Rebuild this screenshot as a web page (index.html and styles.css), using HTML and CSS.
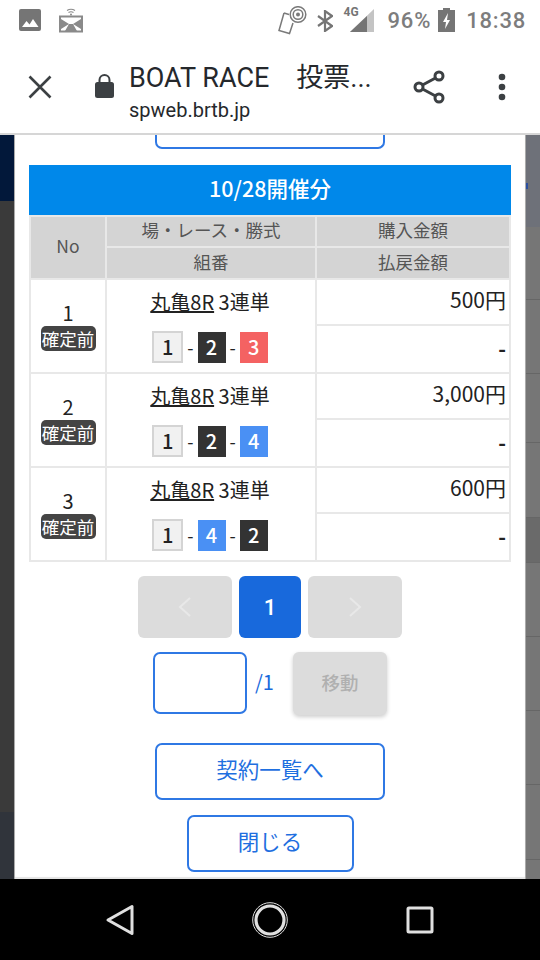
FILE: index.html
```html
<!DOCTYPE html>
<html lang="ja">
<head>
    <meta charset="UTF-8">
    <meta name="viewport" content="width=device-width, initial-scale=1.0">
    <title>BOAT RACE 投票</title>
    <link rel="stylesheet" href="styles.css">
</head>
<body>
    <div class="status-bar">
        <svg class="icon-image" width="22" height="22" viewBox="0 0 22 22"><rect width="22" height="22" rx="2" fill="#757575"/><path d="M3 18l4.500-6 3 3.500 3.500-5.500 5.500 8z" fill="#fff"/></svg>
        <svg class="icon-cast" width="24" height="26" viewBox="0 0 24 26" fill="none" stroke="#8a8a8a"><path d="M8 3.500q4-2.500 8 0M9.500 5.500q2.500-1.500 5 0" stroke-width="1.200"/><circle cx="12" cy="7.500" r="1" fill="#8a8a8a" stroke="none"/><rect x="1" y="9.500" width="22" height="15" stroke-width="2"/><path d="M2 12l8 5-8 5zM22 12l-8 5 8 5zM10 17h4l4 7H6z" fill="#8a8a8a" stroke="none"/></svg>
        <div class="spacer"></div>
        <svg class="icon-nfc" width="29" height="29" viewBox="0 0 29 29" fill="none" stroke="#7a7a7a" stroke-width="1.500"><path d="M6 7L1 24.500 11.500 27.500 15 17"/><path d="M6 7l5 1.500"/><circle cx="20" cy="8.500" r="7.800"/><circle cx="20" cy="8.500" r="4.800"/><circle cx="20" cy="8.500" r="2" fill="#7a7a7a" stroke="none"/></svg>
        <svg class="icon-bt" width="16" height="22" viewBox="0 0 16 22" fill="none" stroke="#757575" stroke-width="2.200"><path d="M1 6l14 10-7 5V1l7 5L1 16"/></svg>
        <div class="signal">
            <span class="signal-text">4G</span>
            <svg width="24" height="23" viewBox="0 0 24 23"><path d="M24 0v23H0z" fill="#c4c4c4"/><path d="M17 7v16H0z" fill="#757575"/></svg>
        </div>
        <span class="status-text battery-text">96%</span>
        <svg class="icon-battery" width="17" height="24" viewBox="0 0 17 24"><path d="M5 0h7v2h5v22H0V2h5z" fill="#757575"/><path d="M10 5l-5 9h3l-1 7 5-9H9z" fill="#fff"/></svg>
        <span class="status-text">18:38</span>
    </div>

    <div class="toolbar">
        <svg class="icon-close" width="24" height="24" viewBox="0 0 24 24" fill="none" stroke="#3c4043" stroke-width="2.600"><path d="M1.500 1.500l21 21M22.500 1.500l-21 21"/></svg>
        <svg class="icon-lock" width="19" height="25" viewBox="0 0 19 25"><path d="M4.500 9V6a5 5 0 0 1 10 0v3" fill="none" stroke="#3c4043" stroke-width="2"/><rect y="8" width="19" height="16" rx="2.500" fill="#3c4043"/></svg>
        <div class="toolbar-title">
            <div class="page-title">BOAT RACE　投票...</div>
            <div class="page-url">spweb.brtb.jp</div>
        </div>
        <svg class="icon-share" width="32" height="34" viewBox="0 0 32 34" fill="none" stroke="#3c4043" stroke-width="3"><circle cx="6" cy="17" r="4"/><circle cx="26" cy="6" r="4"/><circle cx="26" cy="28" r="4"/><path d="M9.500 15L22.500 8M9.500 19l13 7"/></svg>
        <svg class="icon-more" width="8" height="28" viewBox="0 0 8 28" fill="#3c4043"><circle cx="4" cy="4" r="3.300"/><circle cx="4" cy="14" r="3.300"/><circle cx="4" cy="24" r="3.300"/></svg>
    </div>

    <div class="content">
        <div class="side side-left">
            <div class="seg-navy"></div>
            <div class="seg-dark"></div>
            <div class="seg-slate"></div>
        </div>

        <div class="modal">
            <div class="cut-button"></div>

            <div class="date-head">10/28開催分</div>
            <table class="bets">
                <colgroup>
                    <col class="col-no">
                    <col class="col-race">
                    <col class="col-money">
                </colgroup>
                <tr class="head-row">
                    <th rowspan="2">No</th>
                    <th>場・レース・勝式</th>
                    <th>購入金額</th>
                </tr>
                <tr class="head-row">
                    <th>組番</th>
                    <th>払戻金額</th>
                </tr>

                <tr class="row-top">
                    <td rowspan="2" class="no-cell">1<span class="badge">確定前</span></td>
                    <td rowspan="2" class="race-cell">
                        <div class="race-name"><u>丸亀8R</u> 3連単</div>
                        <div class="tiles">
                            <span class="tile tile-white">1</span>-<span class="tile tile-black">2</span>-<span class="tile tile-red">3</span>
                        </div>
                    </td>
                    <td class="money">500円</td>
                </tr>
                <tr class="row-bottom"><td class="money dash">-</td></tr>

                <tr class="row-top">
                    <td rowspan="2" class="no-cell">2<span class="badge">確定前</span></td>
                    <td rowspan="2" class="race-cell">
                        <div class="race-name"><u>丸亀8R</u> 3連単</div>
                        <div class="tiles">
                            <span class="tile tile-white">1</span>-<span class="tile tile-black">2</span>-<span class="tile tile-blue">4</span>
                        </div>
                    </td>
                    <td class="money">3,000円</td>
                </tr>
                <tr class="row-bottom"><td class="money dash">-</td></tr>

                <tr class="row-top">
                    <td rowspan="2" class="no-cell">3<span class="badge">確定前</span></td>
                    <td rowspan="2" class="race-cell">
                        <div class="race-name"><u>丸亀8R</u> 3連単</div>
                        <div class="tiles">
                            <span class="tile tile-white">1</span>-<span class="tile tile-blue">4</span>-<span class="tile tile-black">2</span>
                        </div>
                    </td>
                    <td class="money">600円</td>
                </tr>
                <tr class="row-bottom"><td class="money dash">-</td></tr>
            </table>

            <div class="pager">
                <div class="page-btn page-arrow">
                    <svg width="14" height="20" viewBox="0 0 14 20" fill="none" stroke="#e8e8e8" stroke-width="2"><path d="M12 1L2 10l10 9"/></svg>
                </div>
                <div class="page-btn page-current">1</div>
                <div class="page-btn page-arrow">
                    <svg width="14" height="20" viewBox="0 0 14 20" fill="none" stroke="#e8e8e8" stroke-width="2"><path d="M2 1l10 9-10 9"/></svg>
                </div>
            </div>

            <div class="jump">
                <input type="text" class="jump-input">
                <span class="jump-total">/1</span>
                <div class="jump-btn">移動</div>
            </div>

            <div class="outline-btn list-btn">契約一覧へ</div>
            <div class="outline-btn close-btn">閉じる</div>
        </div>

        <div class="side side-right">
            <div class="seg-top"><div class="seg-dot"></div></div>
            <div class="seg-row seg-h73"></div>
            <div class="seg-row seg-h74"></div>
            <div class="seg-row seg-h69"></div>
            <div class="seg-row seg-h75"></div>
            <div class="seg-row seg-dim"></div>
            <div class="seg-row seg-h74"></div>
            <div class="seg-row seg-h74"></div>
            <div class="seg-row seg-h74"></div>
            <div class="seg-row seg-h75"></div>
            <div class="seg-end"></div>
        </div>
    </div>

    <div class="nav-bar">
        <svg width="30" height="32" viewBox="0 0 30 32" fill="none" stroke="#e0e0e0" stroke-width="3" stroke-linejoin="round"><path d="M27 2.500v27L3 16z"/></svg>
        <svg width="36" height="36" viewBox="0 0 36 36" fill="none" stroke="#e0e0e0"><circle cx="18" cy="18" r="17.300" stroke-width="1"/><circle cx="18" cy="18" r="14" stroke-width="3.200"/></svg>
        <svg width="30" height="30" viewBox="0 0 30 30" fill="none" stroke="#e0e0e0" stroke-width="3" stroke-linejoin="round"><rect x="3" y="3" width="24" height="24" rx="1"/></svg>
    </div>
</body>
</html>
```

FILE: styles.css
```css
body {
    margin: 0;
    padding: 0;
    width: 540px;
    height: 960px;
    overflow: hidden;
    display: flex;
    flex-direction: column;
    font-family: "Noto Sans CJK JP", "Noto Sans", sans-serif;
    background-color: #fff;
}

/* status bar */
.status-bar {
    height: 40px;
    display: flex;
    align-items: center;
    padding: 0 14px 0 19px;
    box-sizing: border-box;
    background-color: #fff;
}

.icon-cast {
    margin-left: 18px;
}

.spacer {
    flex: 1;
}

.icon-bt {
    margin-left: 10px;
    margin-top: 2px;
}

.signal {
    position: relative;
    width: 24px;
    height: 23px;
    margin-left: 17px;
    margin-top: 1px;
}

.signal-text {
    position: absolute;
    left: -6px;
    top: -4px;
    font-family: "Roboto", sans-serif;
    font-size: 12px;
    line-height: 14px;
    font-weight: 700;
    color: #757575;
}

.status-text {
    font-family: "Roboto", sans-serif;
    font-size: 22px;
    font-weight: 500;
    letter-spacing: 0.8px;
    color: #7d7d7d;
}

.battery-text {
    margin-left: 14px;
}

.icon-battery {
    margin-left: 7px;
    margin-right: 11px;
}

/* browser toolbar */
.toolbar {
    height: 95px;
    display: flex;
    align-items: center;
    box-sizing: border-box;
    padding-left: 28px;
    background-color: #fff;
    border-bottom: 2px solid #d6d6d6;
}

.icon-lock {
    margin-left: 43px;
    margin-top: -1px;
}

.toolbar-title {
    margin-left: 15px;
    margin-top: 16px;
    width: 284px;
    color: #25282c;
}

.page-title {
    font-family: "Roboto", "Noto Sans CJK JP", sans-serif;
    font-size: 27px;
    line-height: 30px;
    white-space: nowrap;
}

.page-url {
    font-family: "Roboto", sans-serif;
    font-size: 20px;
    line-height: 34px;
}

.icon-more {
    margin-left: 53px;
}

/* page behind the dialog */
.content {
    flex: 1;
    display: flex;
    min-height: 0;
}

.side {
    width: 14px;
    display: flex;
    flex-direction: column;
}

.seg-navy {
    height: 66px;
    background-color: #02183a;
}

.seg-dark {
    flex: 1;
    background-color: #3a3a3a;
}

.seg-slate {
    height: 67px;
    background-color: #30343b;
}

.seg-top {
    height: 92px;
    display: flow-root;
    background-color: #6e7179;
}

.seg-dot {
    width: 2px;
    height: 6px;
    margin-top: 48px;
    background-color: #2b50a0;
}

.seg-row {
    box-sizing: border-box;
    background-color: #767676;
    border-bottom: 1px solid #666;
}

.seg-h69 {
    height: 69px;
}

.seg-h73 {
    height: 73px;
}

.seg-h74 {
    height: 74px;
}

.seg-h75 {
    height: 75px;
}

.seg-dim {
    height: 45px;
    background-color: #6a6a6a;
}

.seg-end {
    flex: 1;
    background-color: #767676;
}

/* dialog */
.modal {
    flex: 1;
    min-width: 0;
    display: flex;
    flex-direction: column;
    align-items: center;
    background-color: #fff;
    border-left: 1px solid #aaa;
    border-right: 1px solid #aaa;
    box-shadow: inset 0 -2px 1px #e4e4e4;
}

.cut-button {
    width: 230px;
    height: 14px;
    box-sizing: border-box;
    border: 2px solid #2f78e4;
    border-top: none;
    border-radius: 0 0 7px 7px;
}

.date-head {
    width: 482px;
    height: 50px;
    margin-top: 16px;
    background-color: #0088ea;
    color: #fff;
    font-size: 21.500px;
    font-weight: 500;
    line-height: 46px;
    text-align: center;
}

.bets {
    width: 482px;
    table-layout: fixed;
    border-collapse: collapse;
    border: 2px solid #e8e8e8;
    color: #222;
}

.col-no {
    width: 76px;
}

.col-race {
    width: 210px;
}

.bets th,
.bets td {
    border: 2px solid #e8e8e8;
    padding: 0;
}

.bets th {
    height: 26px;
    padding-bottom: 4px;
    background-color: #d4d4d4;
    color: #555;
    font-size: 17.5px;
    font-weight: 400;
    text-align: center;
}

.bets .head-row:first-child th {
    height: 25px;
}

.row-top td.money {
    height: 38px;
    padding-bottom: 6px;
}

.row-bottom td.money {
    height: 44px;
    padding-bottom: 2px;
}

.no-cell {
    text-align: center;
    font-size: 20px;
    line-height: 24px;
}

.badge {
    display: block;
    width: 55px;
    height: 25px;
    margin: 1px auto 0;
    background-color: #444;
    border-radius: 5px;
    color: #fff;
    font-size: 17.5px;
    line-height: 25px;
}

.bets .race-cell {
    padding-right: 2px;
    text-align: center;
}

.race-name {
    font-size: 20px;
    line-height: 26px;
    color: #222;
}

.tiles {
    display: flex;
    justify-content: center;
    align-items: center;
    gap: 4px;
    margin-top: 16px;
    font-size: 18px;
}

.tile {
    width: 28px;
    height: 31px;
    box-sizing: border-box;
    font-size: 20px;
    font-weight: 500;
    line-height: 29px;
    text-align: center;
    color: #fff;
}

.tile-white {
    width: 31px;
    height: 32px;
    border: 2px solid #d4d4d4;
    background-color: #f1f1f1;
    color: #222;
    line-height: 27px;
}

.tile-black {
    background-color: #333;
}

.tile-red {
    background-color: #f46262;
}

.tile-blue {
    background-color: #4a90f4;
}

.bets .money {
    padding-right: 3px;
    text-align: right;
    font-size: 21px;
}

.bets .dash {
    font-weight: 700;
}

/* paging */
.pager {
    display: flex;
    gap: 7px;
    margin-top: 14px;
}

.page-btn {
    height: 62px;
    display: flex;
    align-items: center;
    justify-content: center;
    border-radius: 6px;
}

.page-arrow {
    width: 94px;
    background-color: #dcdcdc;
}

.page-current {
    width: 62px;
    background-color: #1869dc;
    color: #fff;
    font-family: "Roboto", sans-serif;
    font-size: 22px;
    font-weight: 500;
}

.jump {
    width: 234px;
    display: flex;
    align-items: center;
    margin-top: 14px;
}

.jump-input {
    align-self: flex-start;
    width: 94px;
    height: 62px;
    box-sizing: border-box;
    margin: 0;
    padding: 0;
    border: 2px solid #2f78e4;
    border-radius: 7px;
    background-color: #fff;
}

.jump-total {
    width: 46px;
    padding-left: 8px;
    padding-bottom: 4px;
    box-sizing: border-box;
    color: #1869dc;
    font-size: 20px;
}

.jump-btn {
    width: 94px;
    height: 63px;
    border-radius: 6px;
    background-color: #dcdcdc;
    box-shadow: 0 2px 4px rgba(0, 0, 0, 0.2);
    color: #b0b0b0;
    font-size: 18.5px;
    font-weight: 500;
    line-height: 60px;
    text-align: center;
}

.outline-btn {
    box-sizing: border-box;
    height: 57px;
    border: 2px solid #2f78e4;
    border-radius: 7px;
    color: #1f6fe0;
    font-size: 21.500px;
    line-height: 47px;
    text-align: center;
}

.list-btn {
    width: 230px;
    margin-top: 28px;
}

.close-btn {
    width: 167px;
    margin-top: 15px;
}

/* android nav */
.nav-bar {
    height: 81px;
    display: flex;
    align-items: center;
    justify-content: center;
    gap: 117px;
    background-color: #000;
}
```
